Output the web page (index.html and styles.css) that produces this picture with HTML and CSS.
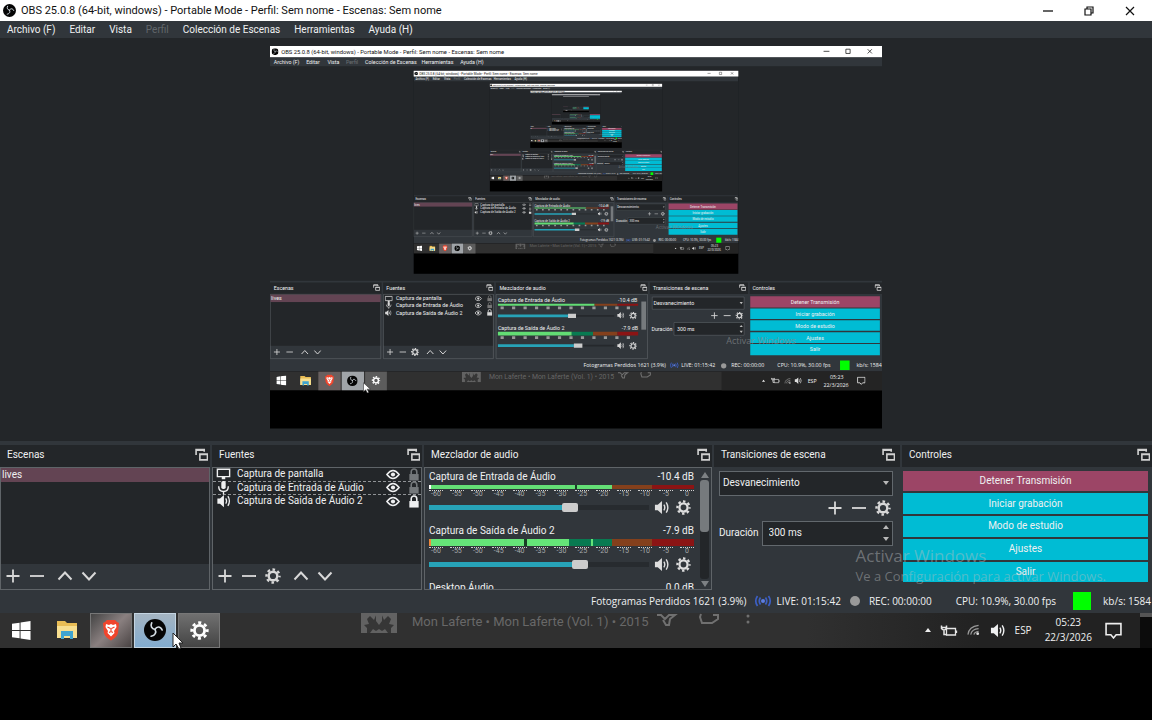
FILE: index.html
```html
<!DOCTYPE html>
<html lang="es">
<head>
<meta charset="utf-8">
<title>OBS 25.0.8 (64-bit, windows)</title>
<link rel="stylesheet" href="styles.css">
</head>
<body>
<svg class="defs" aria-hidden="true">
  <symbol id="obs" viewBox="0 0 20 20"><circle cx="10" cy="10" r="10" fill="#050505"/><g fill="none" stroke="#d5dde3" stroke-width="1.500" stroke-linecap="round"><path d="M10 9.500C7 9 5.600 6.500 7 3.500"/><path d="M10 9.500c1.500-3 5-3.200 6.500.500"/><path d="M10 9.500c1.600 2.700.2 5.500-3.500 6.200"/></g></symbol>
  <symbol id="float" viewBox="0 0 12 12"><path d="M1 6.500V1.500h7.500v2M1 2h7.500" fill="none" stroke="#d0d0d0" stroke-width="1.500"/><path d="M4.500 5.500h7v5.500h-7zM4.500 6h7" fill="#232629" stroke="#d0d0d0" stroke-width="1.500"/></symbol>
  <symbol id="plus" viewBox="0 0 16 16"><path d="M8 1.500v13M1.500 8h13" stroke="currentColor" stroke-width="1.800"/></symbol>
  <symbol id="minus" viewBox="0 0 16 16"><path d="M1 8h14" stroke="currentColor" stroke-width="1.800"/></symbol>
  <symbol id="up" viewBox="0 0 16 16"><path d="M1.500 11.500 8 4.500l6.500 7" fill="none" stroke="currentColor" stroke-width="2"/></symbol>
  <symbol id="down" viewBox="0 0 16 16"><path d="M1.500 4.500 8 11.500l6.500-7" fill="none" stroke="currentColor" stroke-width="2"/></symbol>
  <symbol id="gear" viewBox="0 0 16 16"><circle cx="8" cy="8" r="4.300" fill="none" stroke="currentColor" stroke-width="2.400"/><circle cx="8" cy="8" r="6.500" fill="none" stroke="currentColor" stroke-width="2.400" stroke-dasharray="2.600 2.505" stroke-dashoffset="1.300"/></symbol>
  <symbol id="speaker" viewBox="0 0 16 16"><path d="M1 5h3l4.500-4v14L4 11H1z" fill="currentColor"/><path d="M10.500 5q2 3 0 6M13 2.500q3.500 5.500 0 11" fill="none" stroke="currentColor" stroke-width="1.500"/></symbol>
  <symbol id="screen" viewBox="0 0 16 16"><path d="M1 2.500h14v8.500H1z" fill="none" stroke="currentColor" stroke-width="1.600"/><path d="M6 11h4v3H6z" fill="currentColor"/></symbol>
  <symbol id="mic" viewBox="0 0 16 16"><rect x="5.500" y="0" width="5" height="9" rx="2" fill="currentColor"/><path d="M2.500 6q0 6 5.500 6t5.500-6M8 12v3.500" fill="none" stroke="currentColor" stroke-width="1.600"/></symbol>
  <symbol id="eye" viewBox="0 0 16 12"><path d="M1 6q7-9 14 0-7 9-14 0z" fill="none" stroke="currentColor" stroke-width="1.700"/><circle cx="8" cy="6" r="2.400" fill="currentColor"/></symbol>
  <symbol id="lock" viewBox="0 0 12 14"><path d="M3 7V4a3 3 0 0 1 6 0v3" fill="none" stroke="currentColor" stroke-width="1.700"/><rect x="1" y="6.500" width="10" height="7" fill="currentColor"/></symbol>
  <symbol id="live" viewBox="0 0 18 12"><g fill="none" stroke="#3c5fc4" stroke-width="1.700"><path d="M3.500 1q-3.500 5 0 10M6.500 2.500q-2.500 3.500 0 7M14.500 1q3.500 5 0 10M11.500 2.500q2.500 3.500 0 7"/></g><circle cx="9" cy="6" r="2" fill="#5c7de0"/></symbol>
  <symbol id="win" viewBox="0 0 20 20"><path d="M0 3l8-1.200v7.700H0zM9 1.600 19.500 0v9.500H9zM0 10.500h8v7.700L0 17zM9 10.500h10.500V20L9 18.400z" fill="#fff"/></symbol>
  <symbol id="folder" viewBox="0 0 22 20"><path d="M1 1h8l2 2h10v15H1z" fill="#e9bd55"/><path d="M1 6h20v12H1z" fill="#f8df90"/><path d="M5 11h12v8h-3v-3H8v3H5z" fill="#40a4cf"/></symbol>
  <symbol id="brave" viewBox="0 0 18 22"><path d="M5 1h8l2 2 2 1-1 10q-1 4-7 7.500Q3 18 2 14L1 4l2-1z" fill="#f0452c"/><path d="M4 5l3 1 2-1 2 1 3-1 .500 3-2.500 4 .500 2-3.500 3.500L5.500 14l.500-2L3.500 8z" fill="#fff"/><path d="M5.500 8l3 1.500M12.500 8l-3 1.500M9 9.500v3M7 13.500l2-1 2 1" stroke="#f0452c" stroke-width="1.200" fill="none"/></symbol>
  <symbol id="note" viewBox="0 0 16 16"><path d="M1 1.500h14v10.500H10.500L8 15l-2.500-3H1z" fill="none" stroke="#eee" stroke-width="1.500"/></symbol>
  <symbol id="battery" viewBox="0 0 18 12"><path d="M6.500 4h9v6.500h-9zM16.500 6v2.500" fill="none" stroke="#e5e5e5" stroke-width="1.300"/><path d="M1.500 1v3q2.500 3 5 0V1M4 5v5h3M1 3h6" fill="none" stroke="#e5e5e5" stroke-width="1.500"/></symbol>
  <symbol id="wifi" viewBox="0 0 14 12"><path d="M1 11Q2 2 12.500 1M4 11q1-6 8.500-6.500M7.500 11Q8 8 12.500 7.500" fill="none" stroke="#999" stroke-width="1.300"/><circle cx="11.500" cy="10" r="1.500" fill="#ddd"/></symbol>
  <symbol id="avatar" viewBox="0 0 36 20"><path d="M0 0h36v20H0z" fill="#626262"/><path d="M6 20v-5L3 12l5-1-2-5 3-3 4 4 3-7h4l3 7 4-4 3 3-2 5 5 1-3 3v5h-3l-3-4-3 2-3-2-3 2-3-2-3 4z" fill="#363636"/><path d="M15 0h6v8l-3 4-3-4z" fill="#626262"/></symbol>
</svg>

<main class="app">
  <header class="titlebar">
    <svg class="logo"><use href="#obs"/></svg>
    <h1>OBS 25.0.8 (64-bit, windows) - Portable Mode - Perfil: Sem nome - Escenas: Sem nome</h1>
    <div class="winbtns">
      <button aria-label="Minimizar"><svg viewBox="0 0 10 10"><path d="M0 5h10" stroke="#111" stroke-width="1.300"/></svg></button>
      <button aria-label="Restaurar"><svg viewBox="0 0 10 10"><path d="M1 3h6v6H1zM3 3V1h6v6H7" fill="none" stroke="#111" stroke-width="1.200"/></svg></button>
      <button aria-label="Cerrar"><svg viewBox="0 0 10 10"><path d="M1 1l8 8M9 1 1 9" stroke="#111" stroke-width="1.200"/></svg></button>
    </div>
  </header>
  <nav class="menubar">
    <button>Archivo (F)</button><button>Editar</button><button>Vista</button><button disabled>Perfil</button><button>Colección de Escenas</button><button>Herramientas</button><button>Ayuda (H)</button>
  </nav>

  <section class="preview" aria-label="Vista previa">
    <svg class="mirror" viewBox="0 0 1152 720">
      <g id="desk">
        <rect width="1152" height="720" fill="#000"/>
        <rect width="1152" height="613" fill="#31363b"/>
        <rect y="38" width="1152" height="404" fill="#232629"/>
        <rect width="1152" height="21" fill="#fff"/>
        <use href="#obs" x="3" y="4" width="13" height="13"/>
        <text x="21" y="15" class="m-title">OBS 25.0.8 (64-bit, windows) - Portable Mode - Perfil: Sem nome - Escenas: Sem nome</text>
        <path d="M1042 10h11M1084 6h8v8h-8zM1125 6l8 8M1133 6l-8 8" fill="none" stroke="#222" stroke-width="1.500"/>
        <g class="m-text">
          <text x="7" y="34">Archivo (F)</text><text x="68" y="34">Editar</text><text x="108" y="34">Vista</text><text x="143" y="34" opacity=".3">Perfil</text><text x="179" y="34">Colección de Escenas</text><text x="285" y="34">Herramientas</text><text x="358" y="34">Ayuda (H)</text>
        </g>
        <path d="M0 445h210v22H0zM213 445h209v22H213zM425 445h286v22H425zM715 445h185v22H715zM903 445h249v22H903zM0 467h209v97H0zM213 467h207v97H213z" fill="#232629"/>
        <path d="M.500 467.500h208v121H.500zM213.500 467.500h207v121h-207zM425.500 467.500h285v121h-285z" fill="none" stroke="#686d71"/>
        <rect x="1" y="468" width="207" height="14" fill="#634453"/>
        <use href="#float" x="194" y="448" width="13" height="13"/><use href="#float" x="407" y="448" width="13" height="13"/><use href="#float" x="697" y="448" width="13" height="13"/><use href="#float" x="883" y="448" width="13" height="13"/><use href="#float" x="1138" y="448" width="13" height="13"/>
        <g class="m-text">
          <text x="7" y="459">Escenas</text><text x="219" y="459">Fuentes</text><text x="432" y="459">Mezclador de audio</text><text x="721" y="459">Transiciones de escena</text><text x="908" y="459">Controles</text>
          <text x="2" y="479">lives</text><text x="237" y="479">Captura de pantalla</text><text x="237" y="492">Captura de Entrada de Áudio</text><text x="237" y="506">Captura de Saída de Áudio 2</text>
          <text x="429" y="482">Captura de Entrada de Áudio</text><text x="655" y="482">-10.4 dB</text><text x="429" y="535">Captura de Saída de Áudio 2</text><text x="662" y="535">-7.9 dB</text>
        </g>
        <g color="#d8d8d8">
          <use href="#plus" x="6" y="569" width="14" height="14"/><use href="#minus" x="30" y="569" width="14" height="14"/><use href="#up" x="58" y="569" width="15" height="15"/><use href="#down" x="82" y="569" width="15" height="15"/>
          <use href="#plus" x="219" y="569" width="14" height="14"/><use href="#minus" x="243" y="569" width="14" height="14"/><use href="#gear" x="265" y="568" width="16" height="16"/><use href="#up" x="294" y="569" width="15" height="15"/><use href="#down" x="318" y="569" width="15" height="15"/>
          <use href="#screen" x="216" y="469" width="15" height="15"/><use href="#mic" x="216" y="482" width="15" height="13"/><use href="#speaker" x="216" y="496" width="13" height="13"/>
          <use href="#eye" x="385" y="470" width="14" height="11"/><use href="#eye" x="385" y="483" width="14" height="11"/><use href="#eye" x="385" y="497" width="14" height="11"/><use href="#lock" x="408" y="495" width="11" height="13"/>
          <use href="#speaker" x="653" y="500" width="14" height="14"/><use href="#gear" x="676" y="500" width="15" height="15"/><use href="#speaker" x="653" y="557" width="14" height="14"/><use href="#gear" x="676" y="557" width="15" height="15"/>
          <use href="#plus" x="829" y="500" width="15" height="15"/><use href="#minus" x="853" y="500" width="15" height="15"/><use href="#gear" x="876" y="500" width="15" height="15"/>
        </g>
        <g color="#777"><use href="#lock" x="408" y="469" width="11" height="12"/><use href="#lock" x="408" y="482" width="11" height="12"/></g>
        <path d="M429 485h182v4H429zM429 538h139v7H429z" fill="#62dd74"/><path d="M568 538h40v7h-40z" fill="#087a51"/><path d="M611 485h43v4h-43zM608 538h46v7h-46z" fill="#84401c"/><path d="M654 485h39v4h-39zM654 538h39v7h-39z" fill="#8b1414"/>
        <path d="M434 493h259M434 549h259" stroke="#999" stroke-width="5" stroke-dasharray="6 15.600"/>
        <path d="M429 508h132M429 564h143" stroke="#27a3b8" stroke-width="5"/><path d="M576 508h72M588 564h60" stroke="#25282c" stroke-width="3"/><path d="M561 504h15v8h-15zM572 560h16v8h-16z" fill="#ccc"/>
        <rect x="699" y="481" width="9" height="53" fill="#767a7d"/>
        <path d="M719.500 472.500h173v23h-173zM760.500 520.500h132v24h-132z" fill="#232629" stroke="#62686d"/>
        <path d="M884 482h6l-3 4zM884 529l3-4 3 4zM884 536h6l-3 4z" fill="#bbb"/>
        <path d="M904 471h244v21H904z" fill="#9c4566"/><path d="M904 494h244v20H904zM904 516h244v20H904zM904 539h244v20H904zM904 561h244v21H904z" fill="#00bcd4"/>
        <g class="m-text"><text x="722" y="487">Desvanecimiento</text><text x="718" y="536">Duración</text><text x="766" y="536">300 ms</text></g>
        <g class="m-text m-status"><text x="590" y="605">Fotogramas Perdidos 1621 (3.9%)</text><text x="774" y="605">LIVE: 01:15:42</text><text x="868" y="605">REC: 00:00:00</text><text x="955" y="605">CPU: 10.9%, 30.00 fps</text><text x="1104" y="605">kb/s: 1584</text></g>
        <g class="m-text m-mid"><text x="1026" y="486">Detener Transmisión</text><text x="1026" y="508">Iniciar grabación</text><text x="1026" y="531">Modo de estudio</text><text x="1026" y="553">Ajustes</text><text x="1026" y="575">Salir</text></g>
        <text x="859" y="561" class="m-mark">Activar Windows</text>
        <use href="#live" x="752" y="595" width="18" height="12"/><circle cx="854" cy="602" r="5" fill="#999"/><rect x="1073" y="592" width="18" height="18" fill="#0f0"/>
        <rect y="613" width="1152" height="35" fill="#303030"/><rect x="850" y="613" width="302" height="35" fill="#242424"/>
        <rect x="91" y="613" width="42" height="35" fill="#686060"/><rect x="135" y="613" width="42" height="35" fill="#a0a4a8"/><rect x="179" y="613" width="41" height="35" fill="#5c5c5c"/>
        <use href="#win" x="12" y="620" width="19" height="19"/><use href="#folder" x="56" y="620" width="22" height="20"/><use href="#brave" x="102" y="618" width="20" height="23"/><use href="#obs" x="145" y="620" width="20" height="20"/><use href="#gear" x="191" y="621" width="17" height="17" color="#fff"/>
        <use href="#avatar" x="361" y="613" width="36" height="20"/><text x="412" y="626" class="m-song">Mon Laferte • Mon Laferte (Vol. 1) • 2015</text>
        <path d="M926 632l3-4 3 4z" fill="#eee"/><path d="M655 615h4l4 4 4-4h6l-5 4-1 6h-3l-3-5M699 614l-1 3 2 6h10l6-4v-4h-5" fill="none" stroke="#707070" stroke-width="2"/>
        <use href="#battery" x="943" y="623" width="17" height="13"/><use href="#wifi" x="968" y="625" width="13" height="11"/><use href="#speaker" x="986" y="623" width="16" height="14" color="#ddd"/><use href="#note" x="1105" y="622" width="16" height="16"/>
        <g class="m-text m-status"><text x="1012" y="634">ESP</text><text x="1054" y="626">05:23</text><text x="1042" y="641">22/3/2026</text></g>
      </g>
      <svg x="270" y="46" width="612" height="383" viewBox="0 0 1152 720"><use href="#desk"/>
        <svg x="270" y="46" width="612" height="383" viewBox="0 0 1152 720"><use href="#desk"/>
          <svg x="270" y="46" width="612" height="383" viewBox="0 0 1152 720"><use href="#desk"/>
            <svg x="270" y="46" width="612" height="383" viewBox="0 0 1152 720"><use href="#desk"/>
              <svg x="270" y="46" width="612" height="383" viewBox="0 0 1152 720"><use href="#desk"/></svg>
            </svg>
          </svg>
        </svg>
      </svg>
      <path d="M176 634v17l4-4 3 6 3-1-3-6h6z" fill="#fff" stroke="#222"/>
    </svg>
  </section>

  <div class="docks">
    <section class="dock">
      <h2>Escenas <svg><use href="#float"/></svg></h2>
      <div class="frame">
        <ul class="list"><li class="selected">lives</li></ul>
        <div class="tools"><button aria-label="Agregar escena"><svg><use href="#plus"/></svg></button><button aria-label="Quitar escena"><svg><use href="#minus"/></svg></button><button class="apart" aria-label="Subir escena"><svg><use href="#up"/></svg></button><button aria-label="Bajar escena"><svg><use href="#down"/></svg></button></div>
      </div>
    </section>
    <section class="dock">
      <h2>Fuentes <svg><use href="#float"/></svg></h2>
      <div class="frame">
        <ul class="list sources">
          <li><svg class="kind"><use href="#screen"/></svg><span>Captura de pantalla</span><svg class="eye"><use href="#eye"/></svg><svg class="lock off"><use href="#lock"/></svg></li>
          <li class="dashed"><svg class="kind"><use href="#mic"/></svg><span>Captura de Entrada de Áudio</span><svg class="eye"><use href="#eye"/></svg><svg class="lock off"><use href="#lock"/></svg></li>
          <li><svg class="kind"><use href="#speaker"/></svg><span>Captura de Saída de Áudio 2</span><svg class="eye"><use href="#eye"/></svg><svg class="lock"><use href="#lock"/></svg></li>
        </ul>
        <div class="tools"><button aria-label="Agregar fuente"><svg><use href="#plus"/></svg></button><button aria-label="Quitar fuente"><svg><use href="#minus"/></svg></button><button aria-label="Propiedades"><svg><use href="#gear"/></svg></button><button class="apart" aria-label="Subir fuente"><svg><use href="#up"/></svg></button><button aria-label="Bajar fuente"><svg><use href="#down"/></svg></button></div>
      </div>
    </section>
    <section class="dock">
      <h2>Mezclador de audio <svg><use href="#float"/></svg></h2>
      <div class="frame mixer">
        <div class="channels">
          <div class="channel">
            <div class="name"><label for="v1">Captura de Entrada de Áudio</label><output>-10.4 dB</output></div>
            <div class="meter quiet"></div>
            <div class="scale"><i>-60</i><i>-55</i><i>-50</i><i>-45</i><i>-40</i><i>-35</i><i>-30</i><i>-25</i><i>-20</i><i>-15</i><i>-10</i><i>-5</i><i>0</i></div>
            <div class="volume"><input id="v1" type="range" value="65" style="--v:65%"><button aria-label="Silenciar"><svg><use href="#speaker"/></svg></button><button aria-label="Ajustes de audio"><svg><use href="#gear"/></svg></button></div>
          </div>
          <div class="channel">
            <div class="name"><label for="v2">Captura de Saída de Áudio 2</label><output>-7.9 dB</output></div>
            <div class="meter loud"></div>
            <div class="scale"><i>-60</i><i>-55</i><i>-50</i><i>-45</i><i>-40</i><i>-35</i><i>-30</i><i>-25</i><i>-20</i><i>-15</i><i>-10</i><i>-5</i><i>0</i></div>
            <div class="volume"><input id="v2" type="range" value="70" style="--v:70%"><button aria-label="Silenciar"><svg><use href="#speaker"/></svg></button><button aria-label="Ajustes de audio"><svg><use href="#gear"/></svg></button></div>
          </div>
          <div class="channel"><div class="name"><span>Desktop Áudio</span><output>0.0 dB</output></div></div>
        </div>
        <div class="scroll"><svg viewBox="0 0 8 6"><path d="M0 6l4-6 4 6z" fill="#7d8184"/></svg><div class="track"><div class="thumb"></div></div><svg viewBox="0 0 8 6"><path d="M0 0h8L4 6z" fill="#7d8184"/></svg></div>
      </div>
    </section>
    <section class="dock">
      <h2 class="inset">Transiciones de escena <svg><use href="#float"/></svg></h2>
      <div class="transitions">
        <div class="combo"><select aria-label="Transición"><option>Desvanecimiento</option></select><svg viewBox="0 0 8 5"><path d="M1 0h6L4 4z" fill="#b8b8b8"/></svg></div>
        <div class="tools right"><button aria-label="Agregar transición"><svg><use href="#plus"/></svg></button><button aria-label="Quitar transición"><svg><use href="#minus"/></svg></button><button aria-label="Propiedades de transición"><svg><use href="#gear"/></svg></button></div>
        <div class="duration"><label for="dur">Duración</label><div class="spin"><input id="dur" type="text" value="300 ms"><svg viewBox="0 0 8 18"><path d="M1 5l3-4 3 4zM1 13l3 4 3-4z" fill="#b8b8b8"/></svg></div></div>
      </div>
    </section>
    <section class="dock">
      <h2>Controles <svg><use href="#float"/></svg></h2>
      <div class="controls"><button class="stop">Detener Transmisión</button><button>Iniciar grabación</button><button>Modo de estudio</button><button>Ajustes</button><button>Salir</button></div>
    </section>
    <div class="watermark"><p class="big">Activar Windows</p><p>Ve a Configuración para activar Windows.</p></div>
  </div>

  <footer class="status">
    <span>Fotogramas Perdidos 1621 (3.9%)</span>
    <span class="live"><svg><use href="#live"/></svg>LIVE: 01:15:42</span>
    <span class="rec"><b></b>REC: 00:00:00</span>
    <span class="cpu">CPU: 10.9%, 30.00 fps</span>
    <b class="health"></b>
    <span>kb/s: 1584</span>
  </footer>
</main>

<nav class="taskbar">
  <button aria-label="Inicio"><svg><use href="#win"/></svg></button>
  <button aria-label="Explorador"><svg class="wide"><use href="#folder"/></svg></button>
  <button class="open warm" aria-label="Brave"><svg class="wide"><use href="#brave"/></svg></button>
  <button class="open active" aria-label="OBS"><svg class="wide"><use href="#obs"/></svg></button>
  <button class="open" aria-label="Configuración"><svg><use href="#gear"/></svg></button>
  <div class="song">
    <svg class="cover"><use href="#avatar"/></svg><span>Mon Laferte • Mon Laferte (Vol. 1) • 2015</span>
    <svg class="reactions" viewBox="0 0 96 14"><g fill="none" stroke="#707070" stroke-width="2"><path d="M1 2h4l4 4 4-4h6l-5 4-1 6h-3L7 7M45 1l-1 3 2 6h10l6-4V2h-5"/></g><g fill="#707070"><circle cx="92" cy="3" r="1.500"/><circle cx="92" cy="9" r="1.500"/></g></svg>
  </div>
  <div class="tray">
    <svg class="caret" viewBox="0 0 6 4"><path d="M0 4l3-4 3 4z" fill="#eee"/></svg>
    <svg class="batt"><use href="#battery"/></svg>
    <svg class="wifi"><use href="#wifi"/></svg>
    <svg class="vol"><use href="#speaker"/></svg>
    <span>ESP</span>
    <time>05:23<br>22/3/2026</time>
    <svg class="note"><use href="#note"/></svg>
    <i class="edge"></i>
  </div>
  <svg class="cursor" viewBox="0 0 12 18"><path d="M1 1v14l3-3 3 5 2-1-2-5h4z" fill="#fff" stroke="#222"/></svg>
</nav>
</body>
</html>
```
FILE: styles.css
```css
* { box-sizing: border-box; }
body { margin: 0; min-height: 100vh; background: #000; color: #eff0f1; font: 10px/14px Roboto, "Open Sans", sans-serif; }
h1, h2, p, ul { margin: 0; padding: 0; font-size: inherit; font-weight: normal; list-style: none; }
button, input, select { font: inherit; color: inherit; border: 0; padding: 0; margin: 0; background: none; }
button { display: flex; align-items: center; justify-content: center; }
svg { display: block; flex: none; }
.defs { position: absolute; width: 0; height: 0; }
.app { background: #31363b; }

.titlebar { display: flex; align-items: center; gap: 5px; height: 21px; padding: 0 2px 0 3px; background: #fff; color: #111; font-size: 11px; }
.titlebar h1 { flex: 1; white-space: nowrap; }
.logo { width: 13px; height: 13px; }
.winbtns { display: flex; }
.winbtns button { width: 41px; height: 20px; }
.winbtns svg { width: 10px; height: 10px; }

.menubar { display: flex; gap: 14px; height: 17px; padding-left: 7px; }
.menubar button:disabled { color: #62676b; }

.preview { display: flex; justify-content: center; padding: 8px 0 12px; background: #232629; }
.mirror { width: 53.125%; height: auto; }
.m-title { font-size: 11px; fill: #111; }
.m-text { font-size: 10px; fill: #eff0f1; }
.m-status { font-family: "Open Sans", sans-serif; }
.m-mid { text-anchor: middle; }
.m-mark { font: 17px "Open Sans", sans-serif; fill: #85898c; opacity: .7; }
.m-song { font: 13px Roboto, sans-serif; fill: #666; }

.docks { position: relative; display: grid; grid-template-columns: 210fr 210fr 288fr 186fr 250fr; gap: 2px; padding-top: 4px; }
.dock { display: flex; flex-direction: column; min-width: 0; height: 145px; }
.dock h2 { display: flex; justify-content: space-between; align-items: center; height: 22px; padding: 0 2px 2px 7px; background: #232629; white-space: nowrap; }
.dock h2.inset { padding-right: 5px; }
.dock h2 svg { width: 13px; height: 13px; }
.frame { flex: 1; min-height: 0; display: flex; flex-direction: column; border: 1px solid #5f6468; }
.list { flex: 1; background: #232629; }
.list li { height: 14px; padding-left: 1px; }
.list .selected { background: #634453; }
.tools { display: flex; align-items: center; gap: 8px; height: 25px; padding-left: 4px; color: #d8d8d8; }
.tools svg { width: 16px; height: 16px; }
.tools .apart { margin-left: 4px; }
.right { justify-content: flex-end; padding-right: 2px; }
.list.sources li { display: flex; align-items: center; gap: 6px; height: 13px; padding: 0 1px 0 3px; }
.sources span { flex: 1; white-space: nowrap; }
.list.sources .dashed { height: 14px; border: dashed #909396; border-width: 1px 0; }
.kind { width: 15px; height: 14px; }
.eye { width: 14px; height: 11px; }
.lock { width: 12px; height: 13px; margin-left: 2px; }
.off { color: #74787b; }

.frame.mixer { flex-direction: row; padding: 2px 2px 0 4px; gap: 6px; overflow: hidden; }
.channels { flex: 1; min-width: 0; }
.channel { display: flex; flex-direction: column; padding-bottom: 6px; }
.name { display: flex; justify-content: space-between; height: 15px; white-space: nowrap; }
.quiet { height: 4px; background: linear-gradient(90deg, #fff 2px, #64df76 2px 55%, #183f25 55% 56%, #64df76 56% 69%, #84401c 69% 84%, #8b1414 84%); }
.loud { height: 7px; background: linear-gradient(90deg, #f0883c 2px, #65e478 2px 36%, #183f25 36% 37%, #65e478 37% 53%, #087a51 53% 61%, #65e478 61% 62%, #087a51 62% 69%, #84401c 69% 84%, #8b1414 84%); }
.scale { display: flex; justify-content: space-between; font-size: 7px; line-height: 7px; color: #a9acae; padding-top: 1px; }
.scale i { font-style: normal; width: 14px; text-align: center; border-top: 1px dotted #d0d0d0; }
.volume { display: flex; align-items: center; height: 20px; gap: 7px; padding-right: 3px; color: #dedede; }
.volume input { flex: 1; min-width: 0; height: 10px; appearance: none; margin-right: -2px; }
.volume input::-webkit-slider-runnable-track { height: 5px; background: linear-gradient(90deg, #27a3b8 var(--v), #272b2f 0); }
.volume input::-webkit-slider-thumb { appearance: none; width: 16px; height: 9px; margin-top: -2px; border-radius: 2px; background: #ccc; }
.volume svg { width: 15px; height: 15px; }
.scroll { display: flex; flex-direction: column; align-items: center; gap: 2px; width: 9px; padding: 2px 0; }
.scroll svg { width: 8px; height: 6px; }
.track { flex: 1; width: 9px; border-radius: 3px; background: #232629; }
.thumb { height: 53%; border-radius: 3px; background: #767a7d; }

.transitions { padding: 4px 7px 0 5px; }
.combo, .spin { display: flex; align-items: center; height: 25px; padding: 0 2px 0 3px; border: 1px solid #62686d; background: #232629; }
.combo select, .spin input { flex: 1; min-width: 0; appearance: none; }
.combo svg { width: 8px; height: 5px; }
.duration { display: flex; align-items: center; gap: 3px; }
.duration .spin { flex: 1; min-width: 0; padding-left: 6px; }
.spin svg { width: 8px; height: 18px; }
.controls { flex: 1; display: flex; flex-direction: column; gap: 2px; padding: 4px 4px 7px 1px; }
.controls button { flex: 1; background: #00bcd4; }
.controls .stop { background: #9c4566; }
.watermark { position: absolute; right: 46px; bottom: 5px; color: rgba(185, 188, 190, .45); font: 13px/18px "Open Sans", sans-serif; white-space: nowrap; pointer-events: none; }
.watermark .big { font-size: 17px; line-height: 22px; }

.status { display: flex; justify-content: flex-end; align-items: center; height: 23px; padding-right: 1px; gap: 12px; font-family: "Open Sans", sans-serif; white-space: nowrap; }
.status span { display: flex; align-items: center; gap: 5px; }
.status .live { margin-left: -5px; }
.live svg { width: 18px; height: 12px; }
.status .rec { gap: 9px; margin-left: -3px; }
.rec b { width: 10px; height: 10px; border-radius: 50%; background: #999; }
.status .cpu { margin: 0 5px 0 12px; }
.health { width: 18px; height: 18px; background: #0f0; }

.taskbar { position: relative; display: flex; gap: 2px; height: 35px; background: linear-gradient(90deg, #303030 70%, #222 85%); }
.taskbar > button { width: 42px; height: 35px; color: #fff; }
.taskbar > button:not(.open) { width: 43px; }
.taskbar > button svg { width: 19px; height: 19px; }
.taskbar > button .wide { width: 22px; height: 22px; }
.taskbar > .open { border: 1px solid #777; background: linear-gradient(#707070, #444); }
.taskbar > .warm { background: linear-gradient(135deg, #444, #8a8080 50%, #4a4444); }
.taskbar > .active { border-color: #c4d5e2; background: linear-gradient(#a5b5c2, #82acd0); }
.song { flex: 1; display: flex; align-items: flex-start; padding-left: 139px; font: 13px/17px Roboto, sans-serif; color: #686868; white-space: nowrap; }
.cover { width: 36px; height: 20px; margin-right: 15px; }
.reactions { width: 96px; height: 14px; margin-left: 8px; }
.tray { display: flex; align-items: center; gap: 9px; font-family: "Open Sans", sans-serif; }
.caret { width: 6px; height: 4px; }
.batt { width: 18px; height: 13px; }
.wifi { width: 13px; height: 12px; }
.vol { width: 17px; height: 15px; }
.tray time { text-align: center; line-height: 15px; margin: 0 4px; }
.note { width: 17px; height: 17px; }
.edge { width: 12px; height: 35px; margin-left: 9px; background: #0c0c0c; border-top: 4px solid #555; }
.cursor { position: absolute; left: 172px; top: 19px; width: 12px; height: 18px; }
```
